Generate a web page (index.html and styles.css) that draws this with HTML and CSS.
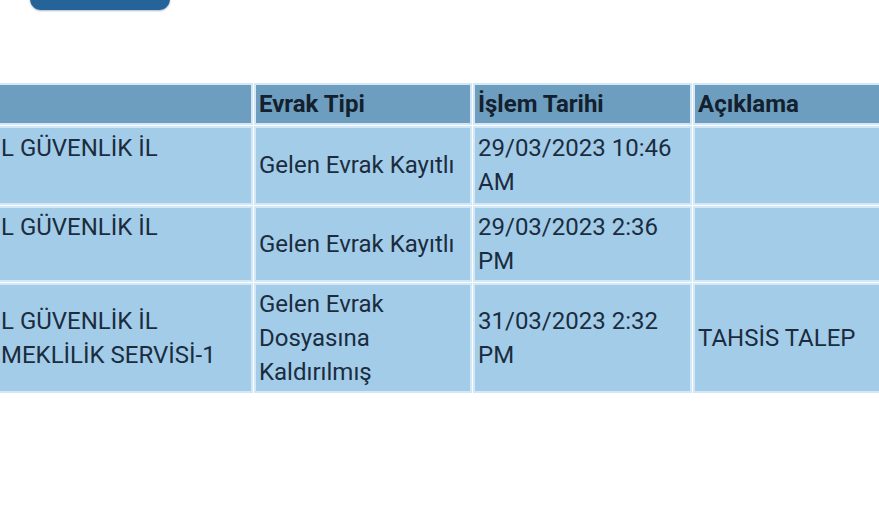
FILE: index.html
```html
<!DOCTYPE html>
<html lang="tr">
<head>
<meta charset="utf-8">
<link rel="stylesheet" href="styles.css">
</head>
<body>
<div class="page">
  <div class="btn-row"><button class="btn" type="button"></button></div>
  <table class="grid">
    <thead>
      <tr>
        <th class="c1"></th>
        <th class="c2">Evrak Tipi</th>
        <th class="c3">İşlem Tarihi</th>
        <th class="c4">Açıklama</th>
      </tr>
    </thead>
    <tbody>
      <tr>
        <td class="top">L GÜVENLİK İL</td>
        <td>Gelen Evrak Kayıtlı</td>
        <td>29/03/2023 10:46 AM</td>
        <td></td>
      </tr>
      <tr>
        <td class="top">L GÜVENLİK İL</td>
        <td>Gelen Evrak Kayıtlı</td>
        <td>29/03/2023 2:36 PM</td>
        <td></td>
      </tr>
      <tr>
        <td>L GÜVENLİK İL<br>MEKLİLİK SERVİSİ-1</td>
        <td>Gelen Evrak Dosyasına Kaldırılmış</td>
        <td>31/03/2023 2:32 PM</td>
        <td>TAHSİS TALEP</td>
      </tr>
    </tbody>
  </table>
</div>
</body>
</html>
```

FILE: styles.css
```css
html, body {
  margin: 0;
  padding: 0;
  background: #ffffff;
  overflow: hidden;
}
.page {
  width: 879px;
  height: 505px;
  overflow: hidden;
  font-family: Roboto, "Liberation Sans", sans-serif;
  color: #1b2c3e;
}
.btn-row {
  display: flex;
  align-items: flex-end;
  height: 10px;
  padding-left: 30px;
}
.btn {
  flex: none;
  width: 140px;
  height: 40px;
  border: none;
  border-radius: 11px;
  background: #246499;
  box-shadow: 0 1px 2px rgba(20, 60, 100, 0.35);
}
.grid {
  margin-top: 72px;
  margin-left: -5px;
  border-collapse: separate;
  border-spacing: 1px;
  background: #ffffff;
  table-layout: fixed;
  width: 900px;
  font-size: 24px;
  line-height: 34px;
}
.grid th, .grid td {
  border: 2px solid #d2e8f6;
  padding: 2px 4px 2px 3px;
  text-align: left;
  vertical-align: middle;
}
.grid th {
  background: #6d9ebf;
  font-weight: 700;
  color: #13202e;
}
.grid td {
  background: #a3cce9;
}
.grid td.top {
  vertical-align: top;
}
.grid tbody tr:first-child td {
  padding-top: 3px;
  padding-bottom: 4px;
}
.c1 { width: 246px; }
.c2 { width: 207px; }
.c3 { width: 208px; }
.c4 { width: 200px; }
```
